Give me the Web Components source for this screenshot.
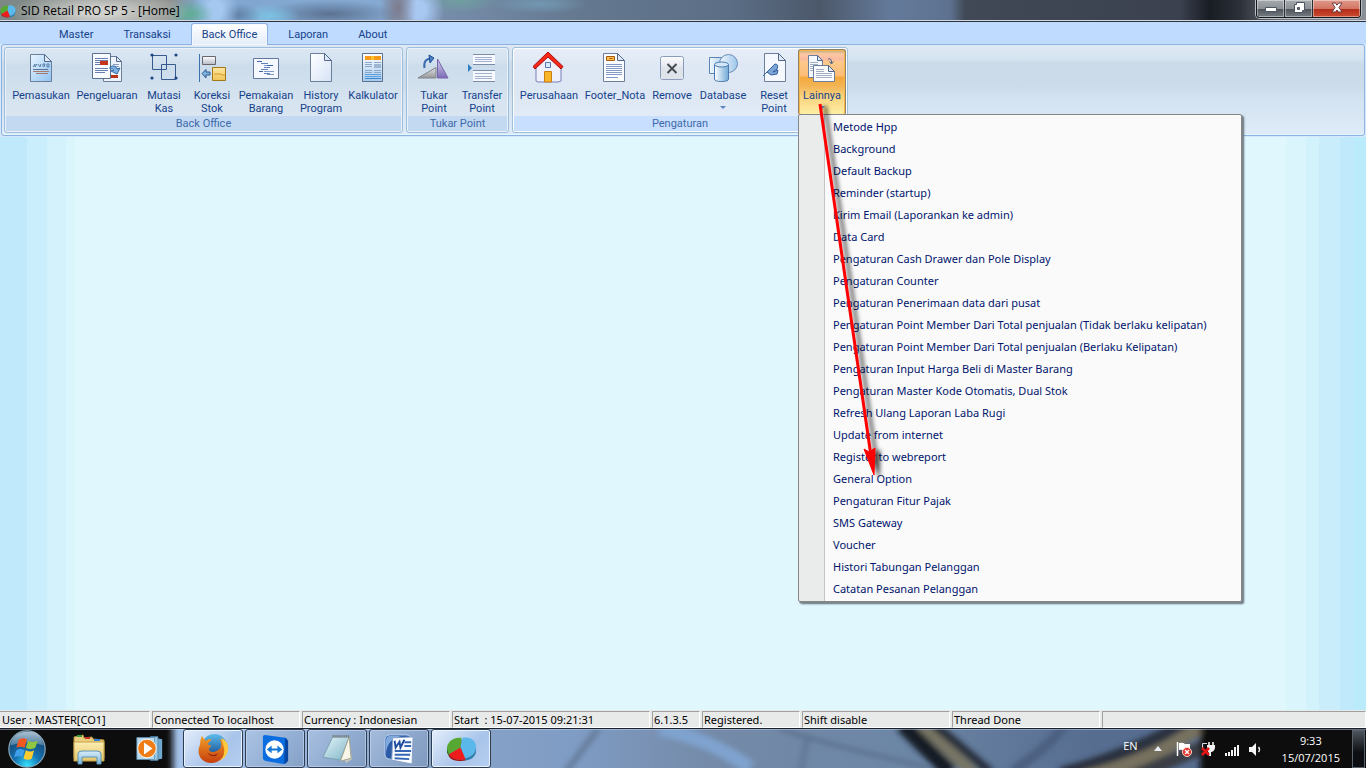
<!DOCTYPE html>
<html lang="id">
<head>
<meta charset="utf-8">
<title>SID Retail PRO SP 5 - [Home]</title>
<style>
html,body{margin:0;height:100%;overflow:hidden}
body{font:11px/14px "Noto Sans","Open Sans",sans-serif;color:#000}
</style>
</head>
<body>
<app-window>
  <title-bar slot="title">SID Retail PRO SP 5 - [Home]</title-bar>
  <ribbon-tabs slot="tabs">
    <ribbon-tab>Master</ribbon-tab>
    <ribbon-tab>Transaksi</ribbon-tab>
    <ribbon-tab active>Back Office</ribbon-tab>
    <ribbon-tab>Laporan</ribbon-tab>
    <ribbon-tab>About</ribbon-tab>
  </ribbon-tabs>
  <ribbon-panel slot="ribbon">
    <ribbon-group caption="Back Office">
      <ribbon-button size="xl" icon="pemasukan">Pemasukan</ribbon-button>
      <ribbon-button size="xl" icon="pengeluaran">Pengeluaran</ribbon-button>
      <ribbon-button icon="mutasi">Mutasi<br>Kas</ribbon-button>
      <ribbon-button icon="koreksi">Koreksi<br>Stok</ribbon-button>
      <ribbon-button size="l" icon="pemakaian">Pemakaian<br>Barang</ribbon-button>
      <ribbon-button size="s" icon="history">History<br>Program</ribbon-button>
      <ribbon-button size="m" icon="kalkulator">Kalkulator</ribbon-button>
    </ribbon-group>
    <ribbon-group caption="Tukar Point">
      <ribbon-button icon="tukar">Tukar<br>Point</ribbon-button>
      <ribbon-button icon="transfer">Transfer<br>Point</ribbon-button>
    </ribbon-group>
    <ribbon-group caption="Pengaturan" hot>
      <ribbon-button size="xl" icon="rumah">Perusahaan</ribbon-button>
      <ribbon-button size="xl" icon="footer">Footer_Nota</ribbon-button>
      <ribbon-button icon="remove">Remove</ribbon-button>
      <ribbon-button size="m" icon="database" arrow>Database</ribbon-button>
      <ribbon-button icon="reset">Reset<br>Point</ribbon-button>
      <ribbon-button icon="lainnya" arrow open>Lainnya
        <drop-menu slot="menu">
          <menu-item>Metode Hpp</menu-item>
          <menu-item>Background</menu-item>
          <menu-item>Default Backup</menu-item>
          <menu-item>Reminder (startup)</menu-item>
          <menu-item>Kirim Email (Laporankan ke admin)</menu-item>
          <menu-item>Data Card</menu-item>
          <menu-item>Pengaturan Cash Drawer dan Pole Display</menu-item>
          <menu-item>Pengaturan Counter</menu-item>
          <menu-item>Pengaturan Penerimaan data dari pusat</menu-item>
          <menu-item>Pengaturan Point Member Dari Total penjualan (Tidak berlaku kelipatan)</menu-item>
          <menu-item>Pengaturan Point Member Dari Total penjualan (Berlaku Kelipatan)</menu-item>
          <menu-item>Pengaturan Input Harga Beli di Master Barang</menu-item>
          <menu-item>Pengaturan Master Kode Otomatis, Dual Stok</menu-item>
          <menu-item>Refresh Ulang Laporan Laba Rugi</menu-item>
          <menu-item>Update from internet</menu-item>
          <menu-item>Register to webreport</menu-item>
          <menu-item>General Option</menu-item>
          <menu-item>Pengaturan Fitur Pajak</menu-item>
          <menu-item>SMS Gateway</menu-item>
          <menu-item>Voucher</menu-item>
          <menu-item>Histori Tabungan Pelanggan</menu-item>
          <menu-item>Catatan Pesanan Pelanggan</menu-item>
        </drop-menu>
      </ribbon-button>
    </ribbon-group>
  </ribbon-panel>
  <status-bar slot="status">
    <status-cell style="--w:150px">User : MASTER[CO1]</status-cell>
    <status-cell style="--w:148px">Connected To localhost</status-cell>
    <status-cell style="--w:148px">Currency : Indonesian</status-cell>
    <status-cell style="--w:198px">Start  : 15-07-2015 09:21:31</status-cell>
    <status-cell style="--w:48px">6.1.3.5</status-cell>
    <status-cell style="--w:98px">Registered.</status-cell>
    <status-cell style="--w:148px">Shift disable</status-cell>
    <status-cell style="--w:148px">Thread Done</status-cell>
    <status-cell style="--w:auto;flex:1"></status-cell>
  </status-bar>
</app-window>
<task-bar>
  <task-button icon="firefox" label="Firefox" bright></task-button>
  <task-button icon="teamviewer" label="TeamViewer"></task-button>
  <task-button icon="notepad" label="Notepad"></task-button>
  <task-button icon="word" label="Word"></task-button>
  <task-button icon="sid" label="SID Retail" bright></task-button>
</task-bar>

<script>
const page = (x, w, y, h, f, fill) =>
  `<path d="M${x+.5} ${y+.5}h${w-f}l${f} ${f}v${h-f}h${-w}z" fill="${fill}" stroke="#6b7f9c"/><path d="M${x+w-f+.5} ${y+.5}v${f}h${f}z" fill="#dfe8f5" stroke="#53698c"/>`;
const lines = (x, w, ys, c) => ys.map(y => `<path d="M${x} ${y+.5}h${w}" stroke="${c}"/>`).join('');
const grad = (id, a, b, x2 = 0, y2 = 1) =>
  `<linearGradient id="${id}" x1="0" y1="0" x2="${x2}" y2="${y2}"><stop stop-color="${a}"/><stop offset="1" stop-color="${b}"/></linearGradient>`;
const pie = `<ellipse cx="16" cy="18" rx="15" ry="11" fill="#7b8da0"/>
  <path d="M15 15L17 5C25 3 31 8 31 14C31 21 26 25 20 26Z" fill="#5bb8ea"/><path d="M20 26c6-1 11-5 11-11v3c0 6-5 10-11 10z" fill="#2d7fb2"/>
  <path d="M15 15L16 5C8 4 1 9 1 16l2 6Z" fill="#57a832"/><path d="M1 16l2 6v2l-2-4z" fill="#2f7518"/>
  <path d="M15 15L3 22C5 27 13 29 20 27Z" fill="#ee1c1c"/><path d="M3 22c3 5 10 7 17 5v1C12 30 5 28 3 24z" fill="#a30e0e"/>`;
const ICONS = {
  pemasukan: `<defs>${grad('g','#eaf5ff','#8fc3f0',1,1)}</defs>${page(5,21,2,27,7,'url(#g)')}
    <path d="M8 15l2-3v3l2-3m1 0l2 3l1-3m2 3v-3h2l-1 3m3-3v3h2v-3z" stroke="#5b7fa8" fill="none"/>${lines(8,15,[17],'#54749c')}${lines(8,16,[19],'#a8786a')}${lines(11,12,[21],'#a8786a')}`,
  pengeluaran: `${page(12,18,4,25,5,'#eef3fc')}${lines(22,6,[12,14,16],'#8c9cc4')}<path d="M20 23h7v3h-7z" fill="#b53516"/>
    <path d="M1.500 1.500h18v25h-18z" fill="#f8fbff" stroke="#5c718f"/>${lines(4,13,[6,8,16,18],'#6a7fb0')}${lines(4,5,[10,12],'#6a7fb0')}${lines(4,10,[20],'#6a7fb0')}
    <path d="M9 9h8v4H9z" fill="#c4351a"/><path d="M19 15q5-3 7 2l3-1l-3 6l-6-3l3-1q-1-2-4-1z" fill="#7fb2e4" stroke="#32689f"/>`,
  mutasi: `<g fill="none" stroke="#36598f"><path d="M4.500 3.500h14v14h-14zM13.500 12.500h14v15h-14z"/></g><g fill="#1d4484"><circle cx="4" cy="3" r="1.600"/><circle cx="28" cy="3" r="1.600"/><circle cx="4" cy="26" r="1.600"/><circle cx="28" cy="26" r="1.600"/></g>`,
  koreksi: `<defs>${grad('g','#fff','#b5bac5')}${grad('h','#ffe7a0','#f1c358')}</defs><path d="M3.500 2v28" stroke="#3d6fab"/>
    <path d="M6.500 4.500h13v8h-13z" fill="url(#g)" stroke="#66666c"/><path d="M16.500 15.500h13v13h-13z" fill="url(#h)" stroke="#a27817"/><path d="M18 22h7l1 1h3" stroke="#cf9a24" fill="none"/>
    <path d="M6 21.500l4-4v2.500h4v3h-4V26z" fill="#7db4df" stroke="#28598e"/>`,
  pemakaian: `<path d="M3.500 6.500h25v20h-25z" fill="#f5f9ff" stroke="#65789a"/>${lines(7,5,[9],'#3f66a4')}${lines(11,7,[11,17],'#6283b8')}${lines(17,6,[13],'#3f66a4')}${lines(14,6,[15,21],'#6283b8')}${lines(9,4,[19],'#3f66a4')}${lines(17,7,[22,19],'#7f9ac8')}${lines(14,3,[13,19],'#7f9ac8')}`,
  history: `<defs>${grad('g','#fff','#d5e3f6',1,1)}</defs>${page(5,21,1,28,7,'url(#g)')}`,
  kalkulator: `<defs>${grad('g','#fff','#a5caee')}</defs><path d="M5.500 1.500h20v28h-20z" fill="url(#g)" stroke="#5c708f"/><path d="M8 4h16v4H8z" fill="#f79a1c"/><path d="M14 4h3v4h-3z" fill="#ffc22d"/>${lines(8,7,[10,12,14,18,20],'#8ca6c8')}${lines(17,7,[10,18,20],'#8ca6c8')}<path d="M17 12h7v4h-7z" fill="#9db6d4"/>${lines(8,16,[22,24],'#5c9fdb')}${lines(8,16,[26],'#3c86cf')}`,
  tukar: `<defs>${grad('g','#e2e2e5','#95979b')}${grad('h','#d5d0f0','#7c6cb4')}</defs><path d="M0 26L18 15.500V26z" fill="url(#g)" stroke="#808389"/><path d="M19.500 7v19H30z" fill="url(#h)" stroke="#7866ac"/>
    <path d="M6.500 16Q5 7 13 6.500" fill="none" stroke="#3a6cb0" stroke-width="2"/><path d="M11 3l5 3l-4 5z" fill="#4a7fc4" stroke="#214f91"/>`,
  transfer: `<path d="M7 2h22v11H7zM7 18h22v12H7z" fill="#f6f9ff"/><path d="M7 2.500h22M7 12.500h22M7 18.500h22M7 29.500h22" stroke="#7b8ca8"/>${lines(9,17,[5,7,9,21,24,26],'#a3b0cf')}<path d="M2 12l4 4-4 4z" fill="#3180c0"/>`,
  rumah: `<path d="M3 14L15 3l13 11v15l-3 1H5l-2-1z" fill="#eef0fb" stroke="#7980b8"/><path d="M12.500 10.500h5v5h-5z" fill="#d8edff" stroke="#5d77ae"/><path d="M11.500 19.500h7V30h-7z" fill="#f9b52a" stroke="#c97f11"/>
    <path d="M0 14.500L15 0l15 14.500l-2 2.500L15 5L2 17z" fill="#f62819" stroke="#a80e0a"/>`,
  footer: `${page(4,21,1,28,7,'#fafcff')}<path d="M7.500 4.500h8v4h-8z" fill="#ffc257" stroke="#a65b0a"/>${lines(10,4,[6],'#c26a06')}${lines(7,16,[12,14,16,18,20,22],'#849ac4')}${lines(7,12,[25],'#849ac4')}`,
  remove: `<defs>${grad('g','#fbfcff','#c8ced8')}</defs><rect x="4.500" y="4.500" width="23" height="23" rx="2" fill="url(#g)" stroke="#8b9dbb"/><path d="M5 16h22v11H5z" fill="#dfe3ea"/><path d="M11.500 12l9 9m0-9l-9 9" stroke="#474b52" stroke-width="2"/>`,
  database: `<defs>${grad('g','#f2f9ff','#9cc6ea',1,0)}${grad('h','#fff','#6fa9d8',1,0)}</defs><path d="M2.500 5.500h17v16h-17z" fill="url(#g)" stroke="#5b83b3"/><circle cx="21.500" cy="11.500" r="9" fill="url(#g)" stroke="#6d8fb8"/>
    <path d="M7.500 13v14q0 2.500 7 2.500t7-2.500V13z" fill="url(#h)" stroke="#4b7bae"/><ellipse cx="14.500" cy="12.500" rx="7" ry="2.500" fill="#d3e7f8" stroke="#4b7bae"/>`,
  reset: `${page(6,21,1,28,7,'#f5f9ff')}<path d="M5 24L17 12q4 0 2 5l-4 3l5-2l-1 4l-6 1l-4-3" fill="#7da5d6" stroke="#2f5e9c"/>`,
  lainnya: `${page(2,14,3,22,5,'#f5f8fd')}${lines(4,8,[10,12,14,16,18],'#a3aec1')}${page(7,21,13,16,6,'#fbfcff')}${lines(10,8,[17,19],'#a3aec1')}${lines(10,16,[21,23,25],'#a3aec1')}<path d="M22 7q4-1 3.500 4m-2-1.500l2 2.500l2-2.500" fill="none" stroke="#48648d"/>`,
  firefox: `<defs>${grad('g','#5dbcec','#0b3f86')}${grad('h','#f3a02a','#c63d0c')}</defs><circle cx="17" cy="14" r="13" fill="url(#g)"/>
    <path d="M4 3l4 5q4-3 6-1l-4 4q1 2 4 2l-3 4q2 4 7 2q5-1 6-6q0-4-2-7q6 3 6 9c1 10-6 16-14 16C2 31-2 20 2 12q0-5 2-9z" fill="url(#h)"/><path d="M24 5q8 4 7 13q-2 8-9 11q6-5 5-13z" fill="#ffc93c"/><path d="M9 19q5 6 12 2q-3 5-9 2z" fill="#8d2410"/>`,
  teamviewer: `<path d="M3 4q0-2 2-2l21 3q2 0 2 2v22q0 3-4 3L6 29q-3-1-3-3z" fill="#0a6de0"/><path d="M26 5l3 3v21l-4 3z" fill="#0446a0"/><circle cx="15" cy="17" r="9.500" fill="#fff"/><path d="M7 17l5-4v3h6v-3l5 4l-5 4v-3h-6v3z" fill="#1478d4"/>`,
  notepad: `<defs>${grad('g','#e6f5f9','#7db4c6',1,1)}</defs><path d="M9 5l19-2v4l3 20-6 4z" fill="#c3c6b8"/><path d="M11 4h17L19 28 1 25z" fill="url(#g)" stroke="#799fb0"/><path d="M28 4l2 22-11 3z" fill="#f7f6e9" stroke="#a5a58f"/><path d="M11 3.500h17" stroke="#777" stroke-width="3" stroke-dasharray="1 1"/>`,
  word: `<rect x="1" y="2" width="27" height="25" rx="5" fill="#2b5aa6" stroke="#bdd3f1"/><path d="M2 20Q4 6 18 3H6Q2 3 2 8z" fill="#7da9dd"/><path d="M9 5l21-1-1 28-21-4z" fill="#fbfcff" stroke="#849fc7"/><path d="M11 8l1 7l4-6l1 6l4-8" fill="none" stroke="#1e4da0" stroke-width="2"/><path d="M21 9.500h7M21 13.500h7M11 18.500h17M11 22.500h16M11 26l15 1" stroke="#3567b5" stroke-width="2"/>`,
  sid: pie,
  orb: `<defs><radialGradient id="g" cx=".5" cy=".95" r=".9"><stop stop-color="#35e3ff"/><stop offset=".4" stop-color="#1573b2"/><stop offset="1" stop-color="#163a63"/></radialGradient>${grad('h','#dcecf5','#5c8aa8')}</defs><circle cx="16" cy="16" r="15.300" fill="url(#g)" stroke="#8aa9bc"/>
    <path d="M2 13Q4 2 16 1.500T30 13q-14-5-28 0z" fill="url(#h)" opacity=".75"/>
    <path d="M9 8q4-2 7 0l-2 7q-4-2-7 0z" fill="#f05a22"/><path d="M17 9q3 2 8 0l-2 6q-4 2-8 0z" fill="#8fc73e"/><path d="M7 17q3-2 7 0l-2 6q-3-2-7 0z" fill="#3f9fe8"/><path d="M15 17q4 2 7 0l-2 7q-3 2-7 0z" fill="#ffcb2e"/>`,
  explorer: `<defs>${grad('g','#fbeeb0','#e5c469')}${grad('h','#d8ecf7','#7db9dc')}</defs><path d="M1 4l9-2 1 3 8-1 1 2 11 1v18H1z" fill="#ebce7d" stroke="#b4903b"/><path d="M4 3h5" stroke="#3a9b3e" stroke-width="2"/><path d="M12 5h5" stroke="#cc3328" stroke-width="2"/><path d="M21 7h6" stroke="#2f80d0" stroke-width="2"/><path d="M1 9h30v19H1z" fill="url(#g)" stroke="#c7a24a"/><path d="M5 31V21q0-3 4-3h15q4 0 4 3v10h-4v-7H9v7z" fill="url(#h)" stroke="#5e96ba"/>`,
  media: `<path d="M20 3l11 2v23l-11 2z" fill="#6fa9cf"/><path d="M17 2h9v28h-9z" fill="#9cc8e2" stroke="#4c86ad"/><path d="M1 3h21v26H1z" fill="#bad9ea" stroke="#5b91b5"/><circle cx="13" cy="16" r="11" fill="#ee7d18" stroke="#fff"/><path d="M9.500 9l10 7-10 7z" fill="#fff"/>`,
  flag: `<path d="M1.500 1v14" stroke="#fff" stroke-width="1.500"/><path d="M3 2q4-1 6 1h5v7H9q-3-2-6-1z" fill="#fff"/><circle cx="11" cy="11" r="4.500" fill="#dc2e22" stroke="#fbd5cf"/><path d="M9 9l4 4m0-4l-4 4" stroke="#fff" stroke-width="1.500"/>`,
  plug: `<path d="M7 2.500H2.500V9" fill="none" stroke="#ddd"/><path d="M9 1v4M13 1v4" stroke="#fff" stroke-width="1.500"/><path d="M7 4h8v3q-1 4-4 4v4H9v-3q-2-2-2-8z" fill="#f2f2f2"/><path d="M2 7l7 7m0-7l-7 7" stroke="#e31616" stroke-width="2.500"/>`,
  signal: `<path d="M1 15v-3h2v3zM4 15v-4h2v4zM7 15V9h2v6zM10 15V6h2v9zM13 15V4h2v11z" fill="#f4f4f4"/>`,
  speaker: `<path d="M1 6h3l4-4v13l-4-4H1z" fill="#f6f6f6"/><path d="M10.500 6q2 2.500 0 5" fill="none" stroke="#e4e4e4" stroke-width="1.500"/>`,
  minimize: `<path d="M2.500 7.500h11v4h-11z" fill="#fff" stroke="#4b5563"/>`,
  restore: `<path d="M5.500 2.500h8v8h-2v2h-8v-8h2z" fill="#fff" stroke="#4b5563"/><path d="M6.500 7.500h2v2h-2z" fill="#667" stroke="#4b5563"/>`,
  close: `<path d="M3 3h3.500L8 5.200 9.500 3H13l-3 4.500L13 12H9.500L8 10 6.500 12H3l3-4.500z" fill="#fff" stroke="#6b3a3a"/>`,
};
const small = ['flag','plug','signal','speaker','minimize','restore','close'];
// Gradient ids get the icon's name, so that several icons can share one shadow root.
const icon = n => {
  const v = small.includes(n) ? 16 : 32;
  const art = ICONS[n].replace(/id="(\w)"/g, `id="${n}-$1"`).replace(/url\(#(\w)\)/g, `url(#${n}-$1)`);
  return `<svg viewBox="0 0 ${v} ${v}" aria-hidden="true">${art}</svg>`;
};

const define = (name, render) => customElements.define(name, class extends HTMLElement {
  constructor() { super(); this.attachShadow({mode: 'open'}); }
  connectedCallback() { this.shadowRoot.innerHTML = '<style>*,:host{box-sizing:border-box}button{font:inherit;color:inherit;border:0;padding:0;margin:0;background:none}svg{display:block}</style>' + render(this); }
});

define('app-window', () => `<style>
  :host{display:flex;flex-direction:column;height:calc(100% - 40px)}
  main{flex:1;background:linear-gradient(90deg,#c0eafb 0 27px,#caeefb 27px 47px,#d3f2fc 47px 66px,#daf5fc 66px 75px,#e1f7fe 75px calc(100% - 80px),#daf5fc calc(100% - 80px) calc(100% - 60px),#d2f2fc calc(100% - 60px) calc(100% - 47px),#c9edfb calc(100% - 47px) calc(100% - 26px),#c0eafb calc(100% - 26px) calc(100% - 12px),#b9ebfa calc(100% - 12px))}
  ::slotted([slot=ribbon]){z-index:2}
  </style><slot name="title"></slot><slot name="tabs"></slot><slot name="ribbon"></slot><main></main><slot name="status"></slot>`);

define('title-bar', () => `<style>
  :host{display:flex;height:22px;align-items:flex-start;border-bottom:1px solid #2c3340;box-shadow:inset 0 -1px #cfd8e4;
   background:radial-gradient(90px 22px at 100px 12px,#d0d0cc 20%,#d0d0cc00),radial-gradient(24px 14px at 190px 14px,#5fae95,#5fae9500),radial-gradient(24px 28px at 215px 10px,#a5c8f0 30%,#a5c8f000),radial-gradient(26px 12px at 235px 15px,#5f7ea4,#5f7ea400),radial-gradient(30px 12px at 270px 16px,#7cc3e4,#7cc3e400),radial-gradient(70px 14px at 330px 14px,#5c7292,#5c729200),radial-gradient(18px 40px at 398px 8px,#7d7b8c,#7d7b8c00),radial-gradient(26px 28px at 418px 10px,#a8c8f2 30%,#a8c8f200),radial-gradient(40px 12px at 460px 1px,#6f9fa0,#6f9fa000),radial-gradient(50px 10px at 540px 4px,#7398b2,#7398b200),
   linear-gradient(90deg,#7d8886,#8b8f8c 170px,#7fa6cf 200px,#86aad2 380px,#788fad 430px,#64788f 580px,#5b6e86 730px,#4c586a 820px,#647a9a 890px,#5e7290 950px,#414956 965px,#3b414e 1180px,#181c23 1210px,#2c3139 1240px,#6c727a 1280px,#8b9096)}
  .ico{width:16px;height:16px;margin:3px 5px 0 0}
  h1{flex:1;margin:0;font:12px/16px "Open Sans",sans-serif;padding-top:3px}
  .ctl{display:flex;height:18px;margin-right:5px;border:1px solid #15181d;border-top:0;border-radius:0 0 4px 4px;box-shadow:0 0 0 1px #b9bec5;overflow:hidden}
  button{width:28px;display:flex;justify-content:center;border-right:1px solid #2a2f36;box-shadow:inset 0 0 0 1px #ffffff66;background:linear-gradient(#a5a9ad,#8b9095 9px,#4d5359 9px,#767c83)}
  button:last-child{width:47px;border:0;background:linear-gradient(#e0998a,#d17564 9px,#b32d18 9px,#cc4a31)}
  button svg{width:16px;height:16px}
  </style><div class="ico">${icon('sid')}</div><h1><slot></slot></h1><div class="ctl"><button aria-label="Minimize">${icon('minimize')}</button><button aria-label="Restore">${icon('restore')}</button><button aria-label="Close">${icon('close')}</button></div>`);

define('ribbon-tabs', () => `<style>:host{display:flex;height:22px;padding-left:44px;background:#bfdbff;font:11px/14px Roboto,sans-serif;color:#15428b}</style><slot></slot>`);
define('ribbon-tab', () => `<style>:host{display:flex}
  button{padding:2px 14px 0;height:22px;border:1px solid transparent;border-bottom:0}
  :host([active]) button{padding:1px 10px 0;height:22px;margin:1px 5px 0;background:linear-gradient(#fff,#e3ecf8);border-color:#8db2e3;border-radius:3px 3px 0 0;position:relative;z-index:3;box-shadow:inset 0 0 0 1px #f4f9ff}
  </style><button role="tab"><slot></slot></button>`);

define('ribbon-panel', () => `<style>
  :host{display:block;position:relative;background:#d5e9fb;font:11px/13px Roboto,sans-serif;color:#15428b;padding:0 1px 1px}
  div{display:flex;gap:3px;height:92px;padding:2px;border:1px solid #8db2e3;border-radius:3px;box-shadow:inset 0 -1px #e0f7ff;background:linear-gradient(#dfe9f4,#d5e4f1 14px,#cbdbea 18px,#cbdbea 40px,#d3e3f1 54px,#dfebf9)}
  </style><div><slot></slot></div>`);

define('ribbon-group', e => `<style>
  :host{display:flex;flex-direction:column;border:1px solid #9ebfdb;border-radius:3px;box-shadow:inset 0 0 0 1px #e9f2fb;background:linear-gradient(#dce7f3,#d3e1ef 14px,#ccdceb 18px,#d8e5f1 60px,#dbe8f5)}
  :host([hot]){box-shadow:inset 0 0 0 1px #fff;background:linear-gradient(#e8eef8,#dfe9f5 16px,#dce7f3 40px,#e5edf8)}
  .row{display:flex;height:68px;padding:1px 2px 0 3px}
  .cap{height:15px;margin:0 1px 1px;text-align:center;background:#c2d9f1;color:#3e6aaa;line-height:15px}
  :host([hot]) .row{padding-right:1px}
  :host([hot]) .cap{background:#c8dfff}
  </style><div class="row"><slot></slot></div><div class="cap">${e.getAttribute('caption')}</div>`);

define('ribbon-button', e => `<style>
  :host{display:block;position:relative;width:48px}
  :host([size=s]){width:50px}:host([size=m]){width:54px}:host([size=l]){width:60px}:host([size=xl]){width:66px}
  button{width:100%;height:66px;display:flex;flex-direction:column;align-items:center;text-align:center;padding-top:3px;border-radius:3px}
  svg{width:32px;height:32px;margin-bottom:5px;flex:none}
  i{width:0;border:3px solid transparent;border-top-color:#5a84be;margin-top:4px}
  :host([open]) button{border:1px solid #8e8165;border-bottom:0;padding-top:2px;box-shadow:inset 0 0 0 1px #f7b649;background:linear-gradient(#b8a77c,#fcc9a0 4px,#fbb9a0 9px,#fdc98c 12px,#fcbc76 26px,#f5a83a 27px,#f3b455 36px,#f9d27c 46px,#fff0a8)}
  </style><button ${e.hasAttribute('open') ? 'aria-expanded="true"' : ''}>${icon(e.getAttribute('icon'))}<span><slot></slot></span>${e.hasAttribute('arrow') ? '<i></i>' : ''}</button><slot name="menu"></slot>`);

define('drop-menu', () => `<style>
  :host{position:absolute;left:0;top:65px;width:444px;z-index:10;font:11px/22px "Noto Sans","Open Sans",sans-serif;color:#00156e}
  nav{border:1px solid #868686;border-radius:2px;padding:1px;background:linear-gradient(90deg,#e9eceb 25px,#c5c5c5 25px 26px,#fafafa 26px);box-shadow:1px 1px #7d8588,2px 2px 2px #5a6a78}
  svg{position:absolute;left:0;top:-14px;overflow:visible;pointer-events:none}
  </style><nav role="menu"><slot></slot></nav>
  <svg width="100" height="390" aria-hidden="true"><g filter="url(#s)"><path d="M22 4L73 356" stroke="#f00" stroke-width="3"/><path d="M66 349l5 3 6-4-1 27z" fill="#f00" stroke="#f00"/></g><defs><filter id="s" x="-50%" y="-10%" width="220%" height="120%"><feDropShadow dx="5" dy="2" stdDeviation="2" flood-color="#000" flood-opacity=".7"/></filter></defs></svg>`);
define('menu-item', () => `<style>:host{display:block}button{display:block;width:100%;height:22px;padding-left:33px;text-align:left}button:hover{background:#ffe7a299}</style><button role="menuitem"><slot></slot></button>`);

define('status-bar', () => `<style>:host{display:flex;gap:2px;height:18px;background:#e8eae9;padding-top:1px}</style><slot></slot>`);
define('status-cell', () => `<style>:host{display:block;width:var(--w);height:17px;border:1px solid;border-color:#a0a0a0 #fff #fff #a0a0a0;padding-left:1px;line-height:16px;white-space:pre;overflow:hidden}:host(:first-child){border-left:0;padding-left:2px}</style><slot></slot>`);

define('task-bar', () => `<style>
  :host{display:flex;position:relative;height:40px;color:#fff;border-top:1px solid #1c222b;align-items:center;overflow:hidden;background:#748aa8;font-family:"Open Sans","Noto Sans",sans-serif}
  .bg{position:absolute;inset:0;width:100%;height:100%}
  .bg ~ *{position:relative}
  .orb svg{width:38px;height:38px}.orb{margin-left:8px}
  .exp svg{width:32px;height:32px}.exp{margin-left:27px}
  .med svg{width:27px;height:27px}.med{margin:0 20px 0 31px}
  .apps{display:flex;gap:2px}
  .tray{margin-left:auto;display:flex;align-items:center;height:100%}
  .tray svg{width:16px;height:16px}
  .tray button{margin-right:8px}
  .up{border:4px solid transparent;border-top:0;border-bottom:5px solid #e8eef6;margin:0 14px 0 16px}
  .clock{text-align:center;line-height:17px;margin:0 12px 0 10px}
  .show{width:13px;height:38px;border:1px solid #59616b;background:linear-gradient(#4d545c,#0c0e11 60%)}
  .tray .show{margin-right:1px}
  .lang{margin-bottom:5px}
  </style>
  <svg class="bg" viewBox="0 0 1366 40" preserveAspectRatio="none" aria-hidden="true">
    <defs><filter id="soft" x="-5%" y="-50%" width="110%" height="200%"><feGaussianBlur stdDeviation="3"/></filter>
    <linearGradient id="sky"><stop offset=".12" stop-color="#a7c5ec"/><stop offset=".32" stop-color="#8aa4c8"/><stop offset=".42" stop-color="#7f9cc4"/><stop offset=".52" stop-color="#748aa8"/><stop offset=".66" stop-color="#6c86a5"/><stop offset=".8" stop-color="#566d90"/></linearGradient></defs>
    <path d="M0 0h1366v40H0z" fill="url(#sky)"/>
    <g filter="url(#soft)" fill="none">
      <path d="M598 0L565 45M780 0q40 14 150 40M808 6l-8 40" stroke="#5e7492" stroke-width="5"/><path d="M660 0q50 10 90 40" stroke="#7fa3cf" stroke-width="14"/>
      <path d="M903-4L950 44" stroke="#171c25" stroke-width="16"/><path d="M922-4L972 44" stroke="#777464" stroke-width="12"/><path d="M935-4L990 44" stroke="#252d3a" stroke-width="9"/>
      <path d="M1064-4q-12 20-52 48" stroke="#4b5f80" stroke-width="10"/>
      <path d="M1062 48Q1130 30 1190-6" stroke="#2b3340" stroke-width="18"/><path d="M1082 50Q1150 34 1200-2" stroke="#77715f" stroke-width="14"/><path d="M1130 50L1210 16" stroke="#3a3e44" stroke-width="14"/>
      <path d="M-10-10H173v60H-10zM1200-10h180v60h-180z" fill="#07090c"/>
    </g>
    <path d="M0 .5h1366" stroke="#c9d6f0" stroke-opacity=".5"/>
  </svg>
  <button class="orb" aria-label="Start">${icon('orb')}</button><button class="exp" aria-label="Explorer">${icon('explorer')}</button><button class="med" aria-label="Media Player">${icon('media')}</button>
  <div class="apps"><slot></slot></div>
  <div class="tray"><span class="lang">EN</span><span class="up"></span><button aria-label="Action Center">${icon('flag')}</button><button aria-label="Power">${icon('plug')}</button><button aria-label="Network">${icon('signal')}</button><button aria-label="Volume">${icon('speaker')}</button>
  <div class="clock">9:33<br>15/07/2015</div><button class="show" aria-label="Show desktop"></button></div>`);
define('task-button', e => `<style>
  :host{display:block}
  button{width:60px;height:39px;display:flex;align-items:center;justify-content:center;border:1px solid #2e3c52;border-radius:3px;box-shadow:inset 0 0 0 1px #c9dbf399;background:linear-gradient(135deg,#b7cbe688,#8fa9cd66 50%,#7690b588)}
  :host([bright]) button{background:linear-gradient(135deg,#e4eefb,#a9c4ea 60%,#b6cff0);box-shadow:inset 0 0 0 1px #e9f3ff}
  svg{width:31px;height:31px}
  </style><button aria-label="${e.getAttribute('label')}">${icon(e.getAttribute('icon'))}</button>`);
</script>
</body>
</html>
